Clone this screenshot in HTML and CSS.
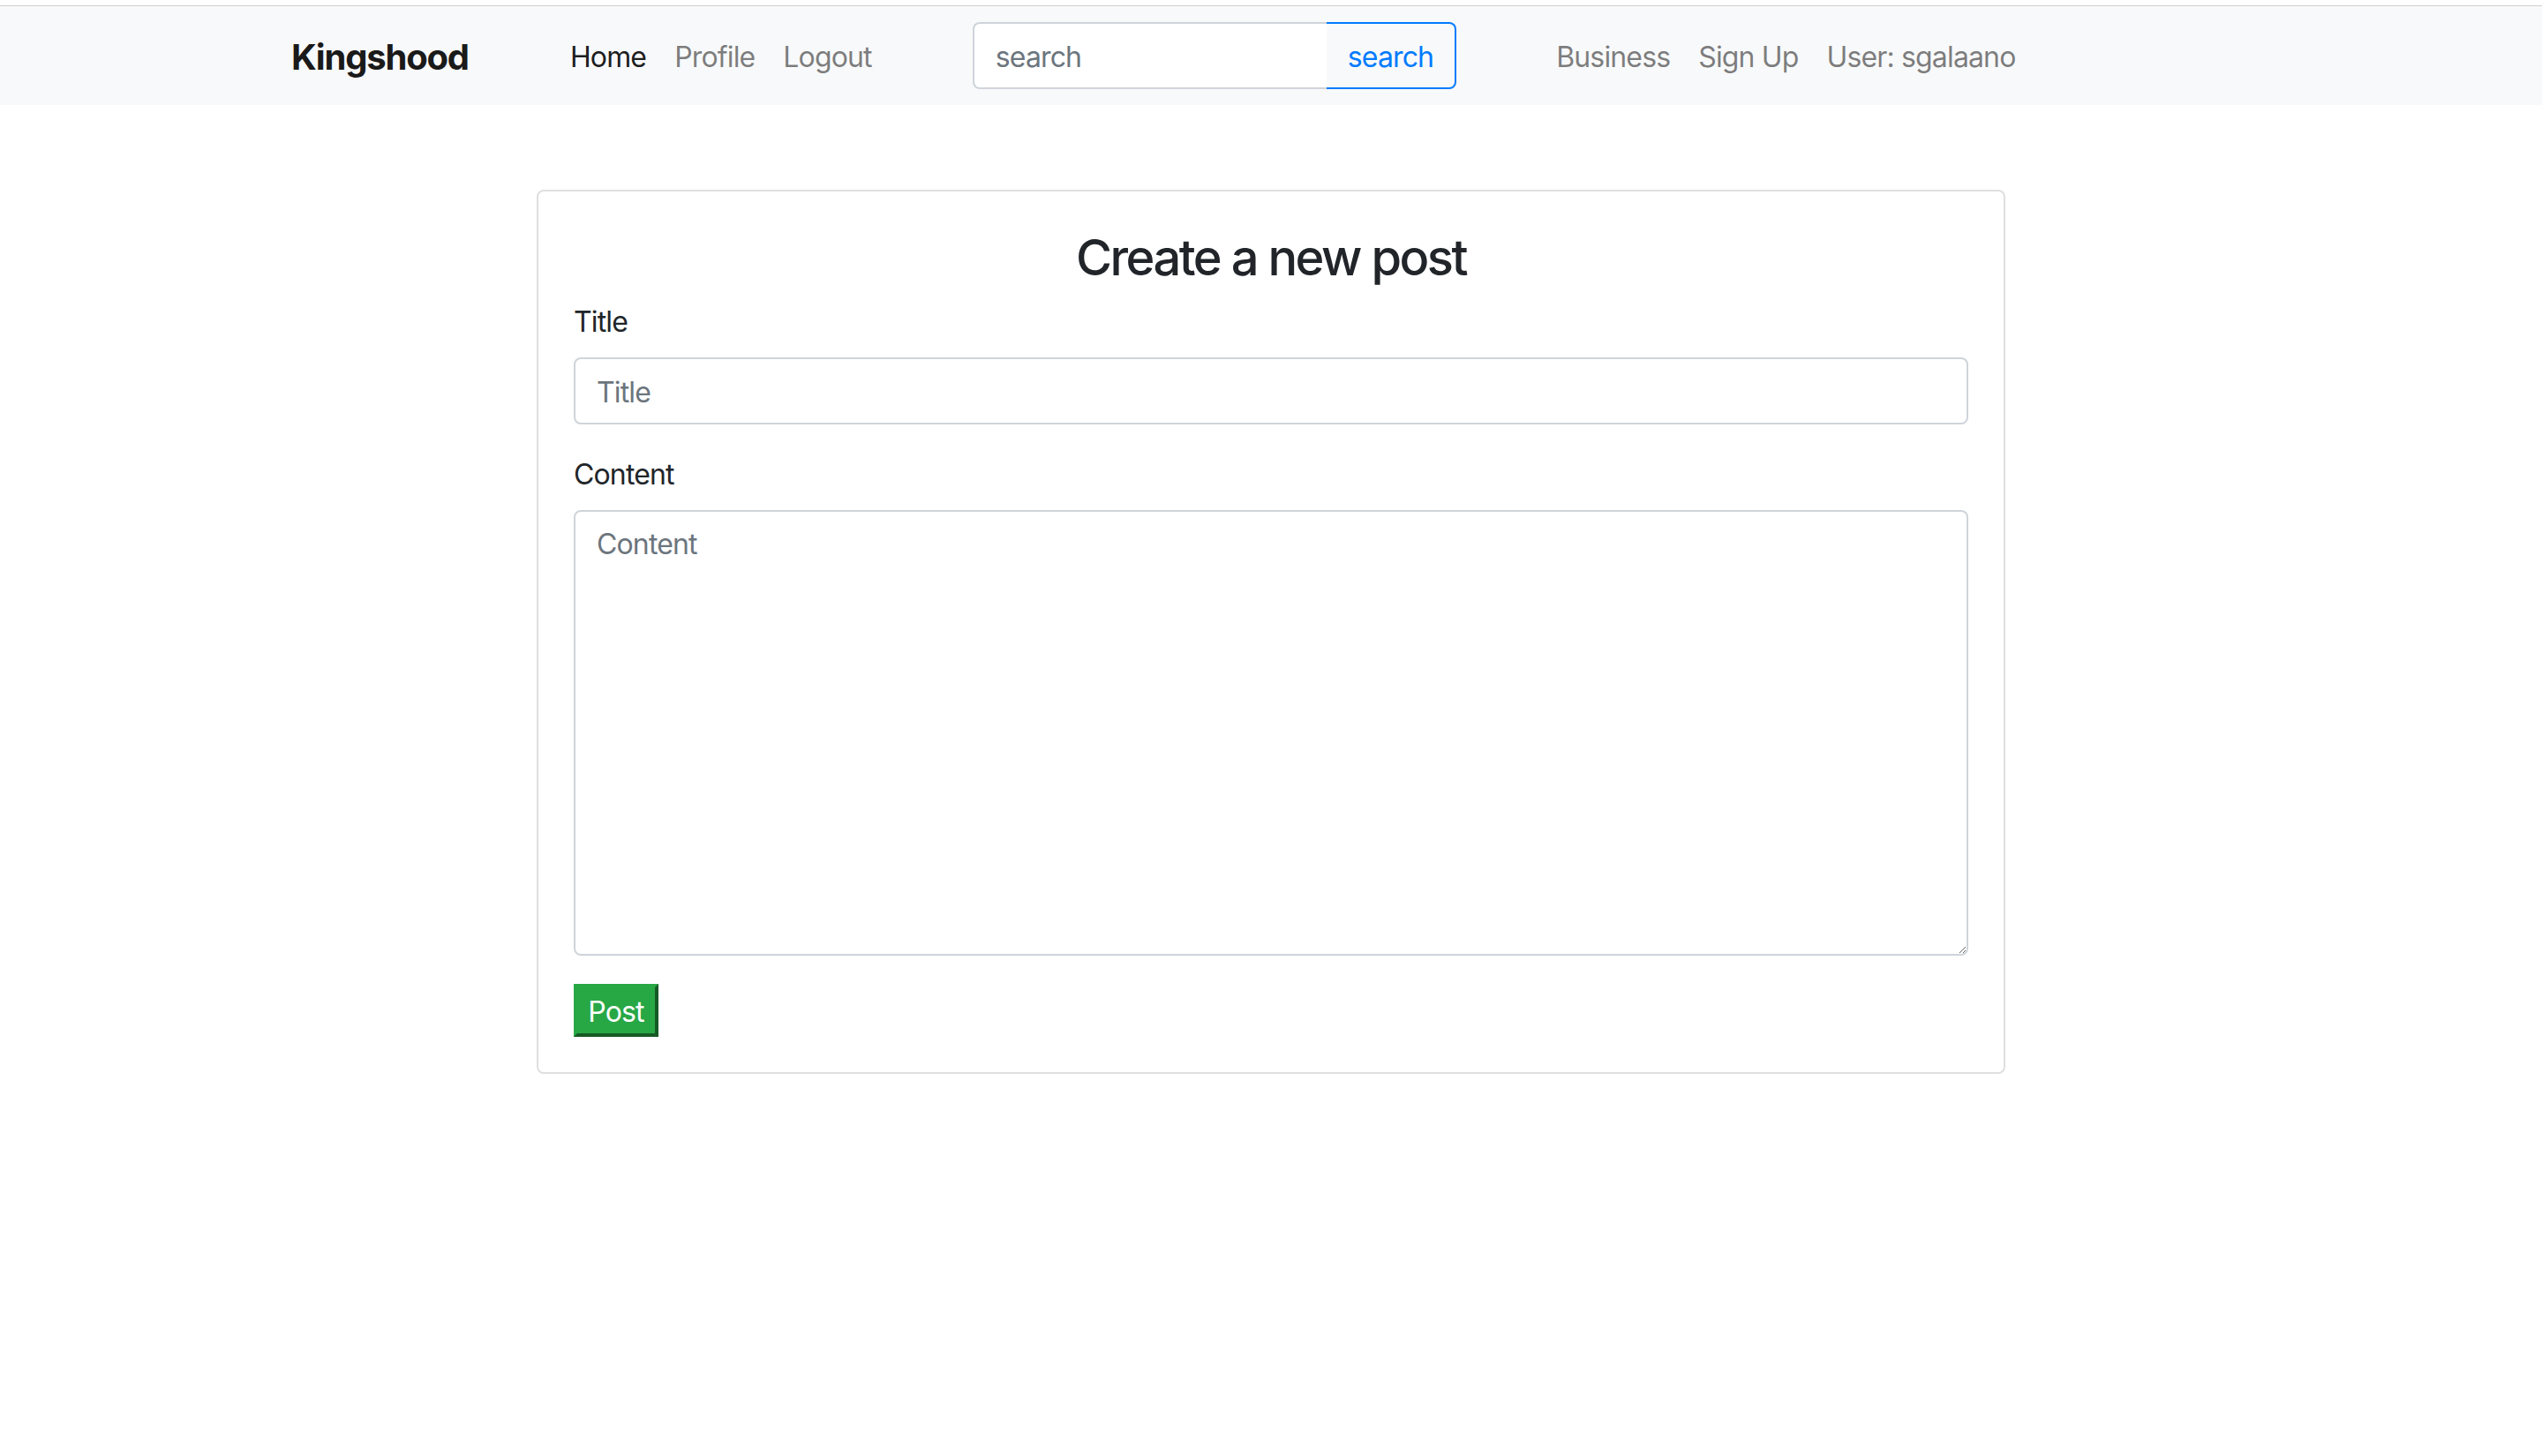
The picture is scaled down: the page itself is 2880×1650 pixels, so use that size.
FILE: index.html
```html
<!DOCTYPE html>
<html lang="en">
<head>
<meta charset="utf-8">
<title>Kingshood - Create a new post</title>
<link rel="stylesheet" href="styles.css">
</head>
<body>
<div class="page-top"></div>
<nav class="navbar">
  <div class="nav-container">
    <a class="brand" href="#">Kingshood</a>
    <ul class="nav-list nav-left">
      <li><a class="nav-link active" href="#">Home</a></li>
      <li><a class="nav-link" href="#">Profile</a></li>
      <li><a class="nav-link" href="#">Logout</a></li>
    </ul>
    <form class="search-form">
      <input class="search-input" type="text" placeholder="search">
      <button class="search-btn" type="button">search</button>
    </form>
    <ul class="nav-list nav-right">
      <li><a class="nav-link" href="#">Business</a></li>
      <li><a class="nav-link" href="#">Sign Up</a></li>
      <li><a class="nav-link" href="#">User: sgalaano</a></li>
    </ul>
  </div>
</nav>
<main class="main">
  <div class="card">
    <h3 class="card-title">Create a new post</h3>
    <div class="form-group">
      <label class="label" for="title">Title</label>
      <input class="form-control" id="title" type="text" placeholder="Title">
    </div>
    <div class="form-group">
      <label class="label" for="content">Content</label>
      <textarea class="form-control textarea" id="content" placeholder="Content"></textarea>
    </div>
    <button class="post-btn" type="button">Post</button>
  </div>
</main>
</body>
</html>
```
FILE: styles.css
```css
* { box-sizing: border-box; }
html, body { margin: 0; padding: 0; background: #fff; }
body {
  font-family: Inter, "Noto Sans", "Liberation Sans", sans-serif;
  color: #212529;
  letter-spacing: -0.85px;
}
.page-top { height: 6px; background: #fff; }
.navbar {
  background: #f8f9fa;
  border-top: 1px solid #cfcfcf;
  height: 113px;
}
.nav-container {
  width: 2280px;
  margin: 0 auto;
  padding: 0 30px;
  height: 112px;
  display: flex;
  align-items: center;
}
.brand {
  font-size: 40px;
  font-weight: 700;
  line-height: 60px;
  padding: 12px 0 8px;
  color: #1a1a1a;
  text-decoration: none;
  letter-spacing: -1.2px;
}
.nav-list {
  list-style: none;
  margin: 0;
  padding: 0;
  display: flex;
}
.nav-left { margin-left: 99px; }
.nav-right { margin-left: 97px; }
.nav-link {
  display: block;
  font-size: 32px;
  line-height: 48px;
  padding: 18px 16px 14px;
  color: rgba(0,0,0,.5);
  text-decoration: none;
}
.nav-link.active { color: rgba(0,0,0,.9); }
.search-form {
  display: flex;
  margin-left: 98px;
}
.search-input {
  width: 401px;
  height: 76px;
  padding: 2px 24px 0;
  font: inherit;
  font-size: 32px;
  letter-spacing: -0.85px;
  color: #495057;
  background: #fff;
  border: 2px solid #ced4da;
  border-right: none;
  border-radius: 8px 0 0 8px;
  outline: none;
}
.search-input::placeholder { color: #6c757d; opacity: 1; }
.search-btn {
  height: 76px;
  padding: 2px 24px 0;
  font: inherit;
  font-size: 32px;
  letter-spacing: -0.85px;
  color: #007bff;
  background: transparent;
  border: 2px solid #007bff;
  border-left: none;
  border-radius: 0 8px 8px 0;
}
.main { padding-top: 96px; }
.card {
  width: 1664px;
  margin: 0 auto;
  padding: 40px;
  border: 2px solid rgba(0,0,0,.125);
  border-radius: 8px;
  background: #fff;
}
.card-title {
  margin: 0 0 16px;
  padding-top: 3px;
  font-size: 56px;
  font-weight: 500;
  line-height: 64px;
  text-align: center;
  color: #212529;
  letter-spacing: -2.5px;
}
.form-group { margin-bottom: 32px; }
.label {
  display: block;
  font-size: 32px;
  line-height: 48px;
  margin-bottom: 16px;
  padding-top: 1px;
  color: #212529;
}
.form-control {
  display: block;
  width: 100%;
  height: 76px;
  padding: 13px 24px 11px;
  font: inherit;
  font-size: 32px;
  line-height: 48px;
  letter-spacing: -0.85px;
  color: #495057;
  background: #fff;
  border: 2px solid #ced4da;
  border-radius: 8px;
  outline: none;
}
.form-control::placeholder { color: #6c757d; opacity: 1; }
.textarea {
  height: 505px;
  resize: vertical;
}
.post-btn {
  display: block;
  width: 96px;
  height: 60px;
  padding: 2px 0 0;
  font: inherit;
  font-size: 32px;
  letter-spacing: -0.85px;
  color: #fff;
  background: #28a745;
  border-style: solid;
  border-width: 4px;
  border-color: #28a745 #155a24 #155a24 #28a745;
  border-radius: 0;
}
```
